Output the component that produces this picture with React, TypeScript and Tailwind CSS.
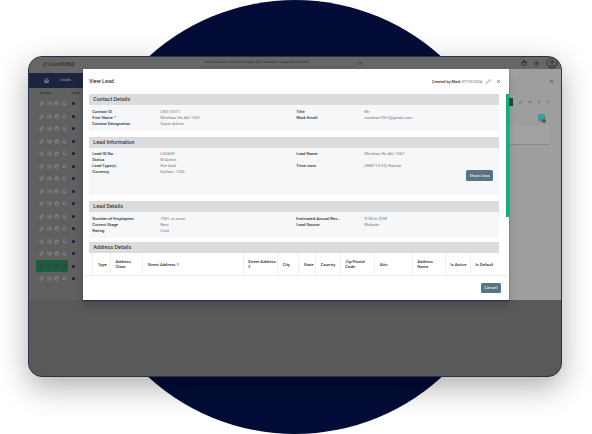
import { Bell, CircleUser, Hand, Home, List, Paperclip, Pencil, Plus, RefreshCw, Filter, Settings, X, Eye, Search } from "lucide-react";

const leadRows = Array.from({ length: 15 }, (_, i) => i);

const tableColumns = [
  { label: "Type", width: "w-[17.7px]" },
  { label: "Address Class", width: "w-[32.3px]" },
  { label: "Street Address 1", width: "w-[100.4px]" },
  { label: "Street Address 2", width: "w-[34.6px]" },
  { label: "City", width: "w-[21px]" },
  { label: "State", width: "w-[17px]" },
  { label: "Country", width: "w-[24.7px]" },
  { label: "Zip/Postal Code", width: "w-[34.3px]" },
  { label: "Attn.", width: "w-[37.7px]" },
  { label: "Address Name", width: "w-[33px]" },
  { label: "Is Active", width: "w-[25px]" },
  { label: "Is Default", width: "w-[26px]" },
];

function SectionHeader({ title }: { title: string }) {
  return (
    <div className="h-[11px] bg-[#dcdcdc] pl-[4.3px] text-[5.4px] leading-[11px] font-medium text-[#3a3a3a]">
      {title}
    </div>
  );
}

function Field({ label, value }: { label?: string; value?: string }) {
  return (
    <>
      <span className="font-medium text-[#333]">{label}</span>
      <span className="text-[#7a7a7a]">{value}</span>
    </>
  );
}

function FieldGrid({ children }: { children: React.ReactNode }) {
  return (
    <div className="grid grid-cols-[68px_136px_68px_1fr] auto-rows-[6.1px] pl-[3.3px] pt-[3.6px] text-[4.2px] leading-[6.1px]">
      {children}
    </div>
  );
}

function BackgroundWindow() {
  return (
    <>
      {/* top bar */}
      <div className="flex h-[12px] items-center bg-[#666] pl-[14px] pr-[3px]">
        <span className="w-[159px] text-[6px] font-medium text-[#2a2a2a]">// LionO360</span>
        <div className="flex h-[8px] w-[155px] items-center border-b border-[#5c5c5c] pl-[2px] text-[3.7px] text-[#333]">
          Search across modules or type @ to search in a specific module
        </div>
        <Search size={4} className="ml-[1px] text-[#333]" />
        <div className="ml-auto flex items-center gap-[7px] text-[#333]">
          <Hand size={6} strokeWidth={3} />
          <Settings size={5} strokeWidth={3} />
          <CircleUser size={12} />
        </div>
      </div>

      <div className="flex h-[231px]">
        {/* leads list */}
        <div className="w-[54px] bg-[#606060]">
          <div className="h-[4px] bg-[#666]" />
          <div className="flex h-[14.5px] items-center bg-[#1c2540] pl-[15px] text-[4px] text-[#999]">
            <Home size={5} strokeWidth={3} className="mr-[11px] text-[#aaa]" />
            Leads
          </div>
          <div className="flex h-[10px] items-center pl-[11px] text-[4px] font-medium text-[#333]">
            Action
            <span className="ml-[20px]">Lead</span>
          </div>
          <div className="flex flex-col">
            {leadRows.map((row) => (
              <div key={row} className="flex h-[12.5px] items-center pl-[7px]">
                <div
                  className={`flex h-[11.7px] w-[32px] items-center gap-[2.6px] pl-[3px] ${
                    row === 13 ? "bg-[#1e5c3f] text-[#3f3f3f]" : "text-[#8f8f8f]"
                  }`}
                >
                  <Paperclip size={5} strokeWidth={3} />
                  <List size={5} strokeWidth={3} />
                  <Hand size={5} strokeWidth={3} />
                  <Bell size={5} strokeWidth={3} />
                </div>
                <span className="ml-[4px] h-[3px] w-[3px] rounded-full bg-[#10204f]" />
              </div>
            ))}
          </div>
        </div>
        <div className="flex-1" />
        {/* right panel */}
        <div className="flex w-[53px] flex-col bg-[#9e9e9e]">
          <div className="flex justify-end pr-[7px] pt-[10px]">
            <X size={5} strokeWidth={3} className="text-[#444]" />
          </div>
          <div className="flex items-center gap-[5px] pl-[0.5px] pt-[14px] text-[#5a7f8f]">
            <div className="mr-[1px] h-[8px] w-[4px] bg-[#1f4d38]" />
            <RefreshCw size={4} strokeWidth={3} />
            <Eye size={4} strokeWidth={3} />
            <Filter size={4} strokeWidth={3} />
            <Plus size={4} strokeWidth={3} />
          </div>
          <div className="flex justify-end pr-[16px] pt-[8px]">
            <div className="relative h-[8px] w-[7px] rounded-[2px] bg-[#3f9a9c]">
              <span className="absolute -bottom-[1px] -right-[1px] h-[4px] w-[4px] rounded-full bg-[#555]" />
            </div>
          </div>
          <div className="ml-[1px] mr-[12px] mt-[4px] h-[19px] border-b border-[#8a8a8a] bg-[#a2a2a2]" />
        </div>
      </div>
    </>
  );
}

function LeadModal() {
  return (
    <div className="absolute left-[54px] top-[12px] flex h-[230.5px] w-[426px] flex-col bg-white pl-[6px] pr-[9.7px] shadow-[0_1px_1px_#2a3050,0_7px_8px_rgba(0,0,0,0.15)]">
      <div className="flex h-[25px] shrink-0 items-center">
        <span className="text-[5.4px] font-medium text-[#333]">View Lead</span>
        <span className="ml-auto text-[3.9px] font-medium text-[#333]">
          Created by Mark <span className="font-normal text-[#666]">07/10/2024</span>
        </span>
        <Pencil size={5} strokeWidth={3} className="ml-[3.5px] text-[#aaa]" />
        <X size={5} strokeWidth={3.5} className="ml-[5px] mr-[-1.3px] text-[#1b9c78]" />
      </div>

      <SectionHeader title="Contact Details" />
      <div className="h-[25.5px] bg-[#f6f7f9]">
        <FieldGrid>
          <Field label="Contact ID" value="CNT10371" />
          <Field label="Title" value="Mr" />
          <Field label="First Name *" value="Wireless Hs Abf 1067" />
          <Field label="Work Email" value="wireless1067@gmail.com" />
          <Field label="Contact Designation" value="Super Admin" />
        </FieldGrid>
      </div>

      <div className="mt-[6px]">
        <SectionHeader title="Lead Information" />
      </div>
      <div className="flex h-[47.4px] bg-[#f6f7f9]">
        <div className="flex-1">
          <FieldGrid>
            <Field label="Lead ID No." value="LD5609" />
            <Field label="Lead Name" value="Wireless Hs Abf 1067" />
            <Field label="Status" value="N/Active" />
            <Field />
            <Field label="Lead Type(s)" value="Hot lead" />
            <Field label="Time zone" value="(GMT-10:00) Hawaii" />
            <Field label="Currency" value="Dollars - USD" />
          </FieldGrid>
        </div>
        <button
          type="button"
          className="mr-[6px] mt-[22.7px] h-[11px] w-[27.6px] rounded-[1.5px] bg-[#577483] text-[4.2px] text-white"
        >
          Show Less
        </button>
      </div>

      <div className="mt-[6.3px]">
        <SectionHeader title="Lead Details" />
      </div>
      <div className="h-[25.7px] bg-[#f6f7f9]">
        <FieldGrid>
          <Field label="Number of Employees" value="1001 or more" />
          <Field label="Estimated Annual Rev..." value="$1M to $2M" />
          <Field label="Current Stage" value="New" />
          <Field label="Lead Source" value="Website" />
          <Field label="Rating" value="Cold" />
        </FieldGrid>
      </div>

      <div className="mt-[4.6px]">
        <SectionHeader title="Address Details" />
      </div>
      <div className="flex h-[22px] shrink-0 pl-[3.3px]">
        {tableColumns.map((col) => (
          <div
            key={col.label}
            className={`${col.width} flex shrink-0 items-center border-l border-[#efefef] pl-[4.4px] pr-[1px] text-[4.2px] leading-[5px] font-medium text-[#333]`}
          >
            {col.label}
          </div>
        ))}
      </div>

      <div className="-ml-[6px] -mr-[9.7px] flex flex-1 items-center justify-end border-t border-[#eee] pr-[8.3px]">
        <button
          type="button"
          className="h-[10px] w-[20px] rounded-[1.5px] bg-[#577483] text-[4.2px] text-white"
        >
          Cancel
        </button>
      </div>
    </div>
  );
}

export default function App() {
  return (
    <div className="relative h-[434px] w-[592px] overflow-hidden bg-white font-['Roboto',Arial,sans-serif]">
      {/* navy circle behind the window */}
      <div className="absolute left-[78px] top-0 h-[434px] w-[434px] rounded-full bg-[#020c37]" />

      <div className="absolute left-[28px] top-[56px] h-[321px] w-[534px] rounded-[14px] border border-[#2a3050] bg-[#595959] shadow-[0_10px_30px_rgba(0,0,0,0.32)]">
        <div className="h-full overflow-hidden rounded-[13px]">
          <BackgroundWindow />
        </div>
        <LeadModal />
        {/* green strip at the modal's edge */}
        <div className="absolute left-[477px] top-[37px] h-[122.5px] w-[3px] bg-[#12b07f]" />
      </div>
    </div>
  );
}
